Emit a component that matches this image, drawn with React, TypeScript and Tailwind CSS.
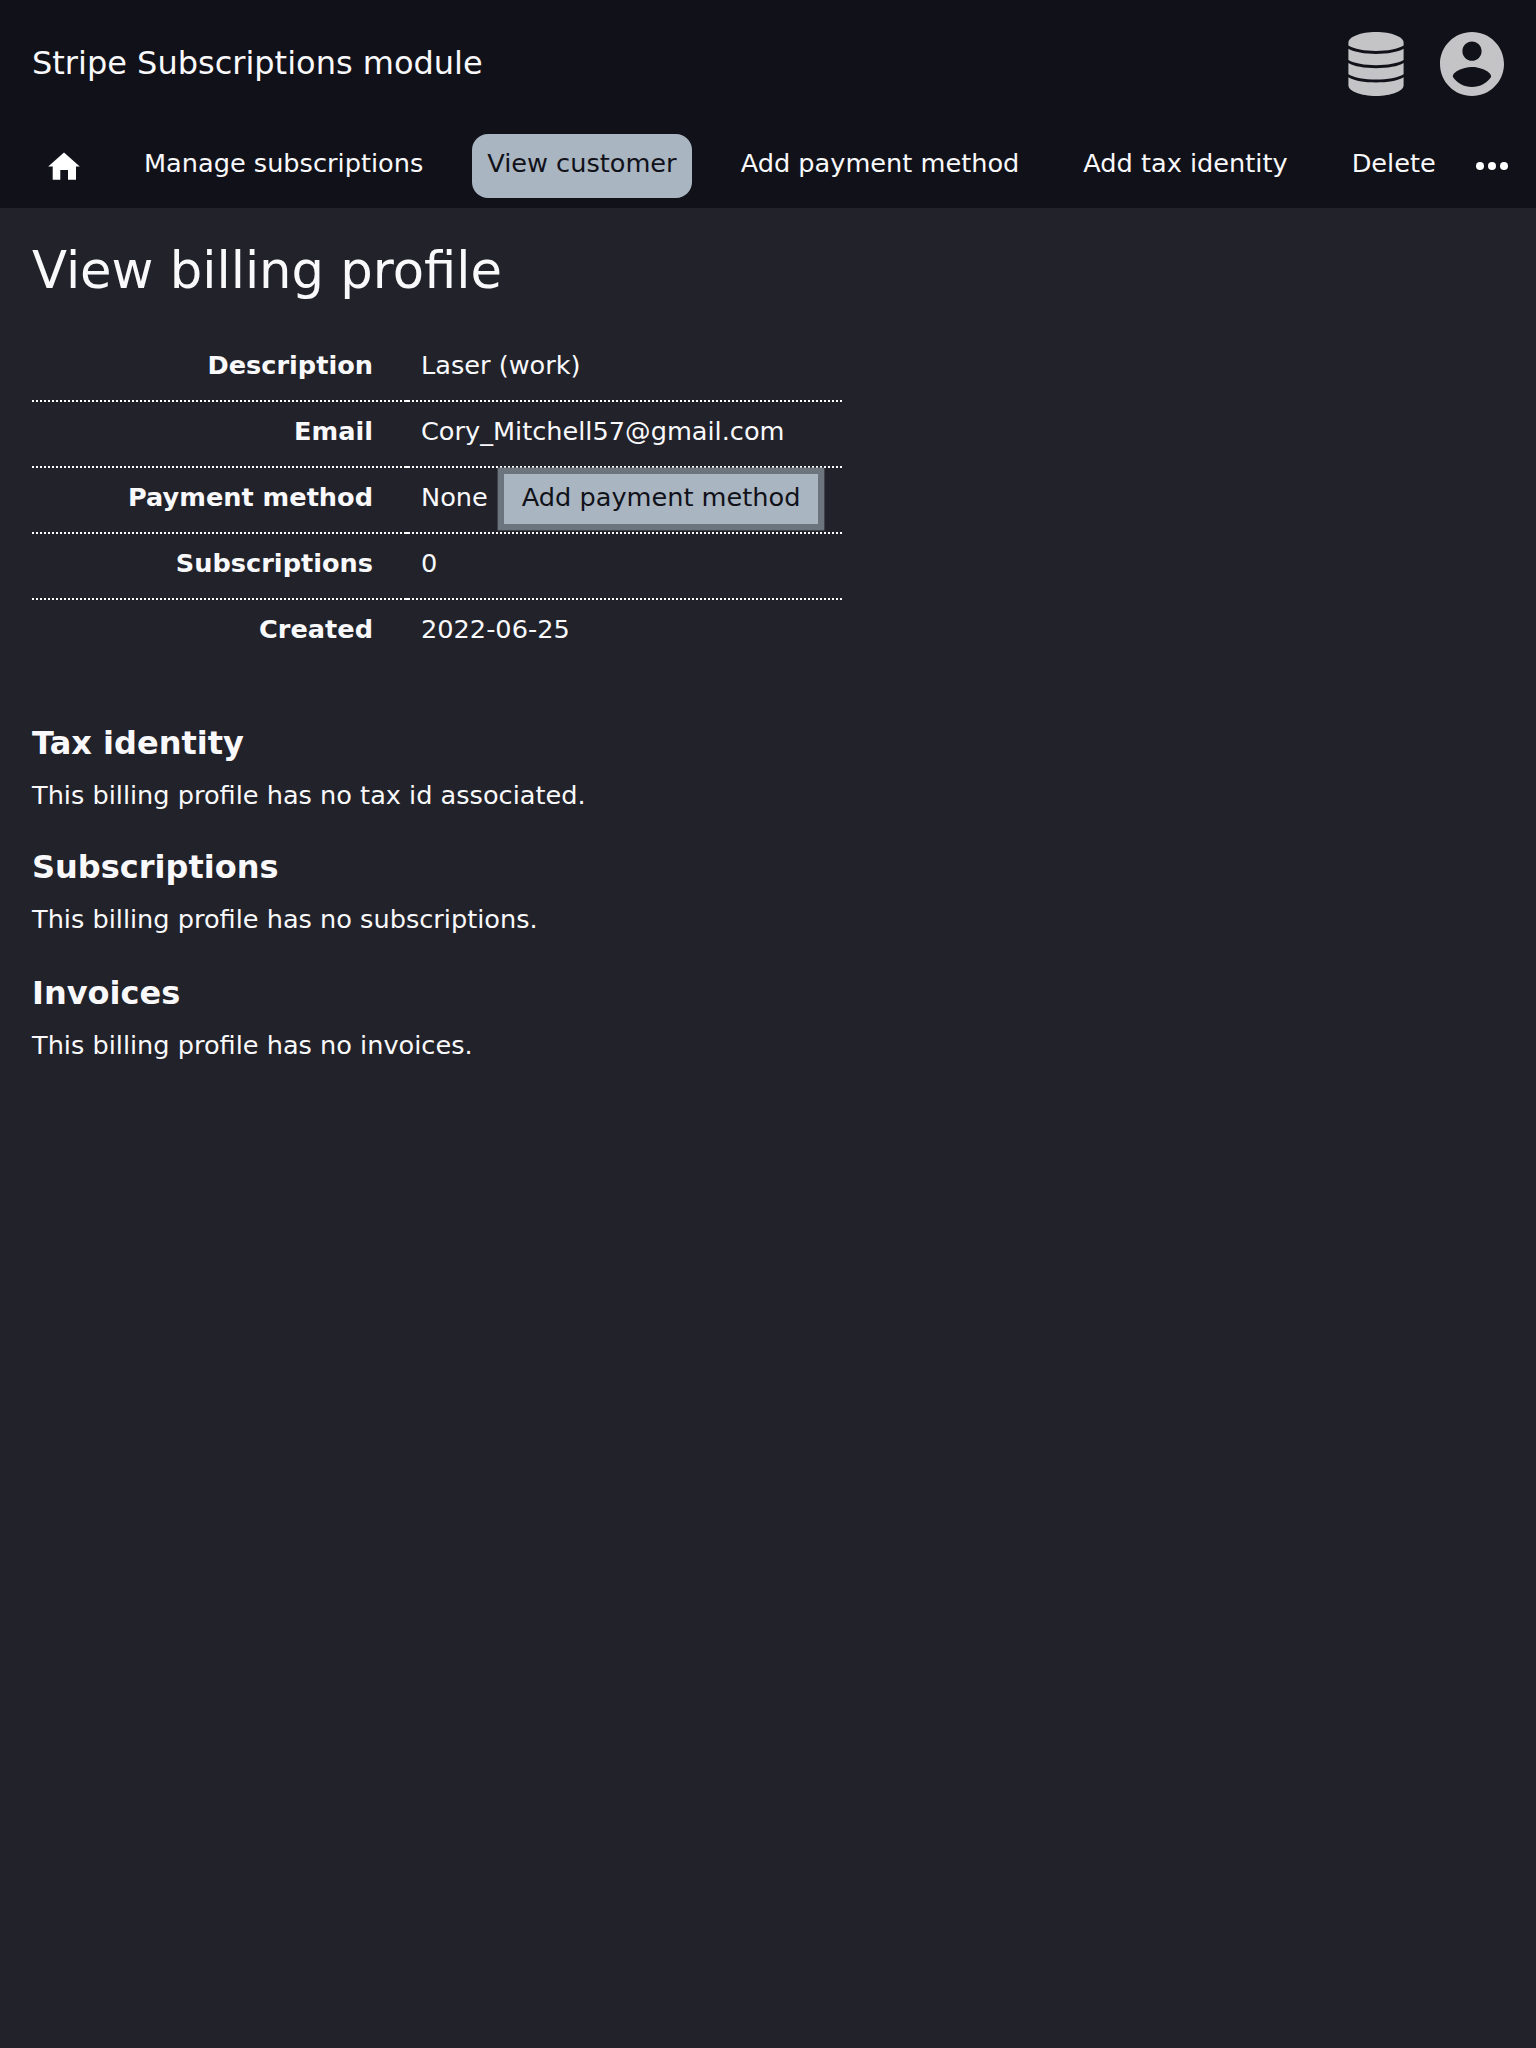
import React from "react";

function HomeIcon() {
  return (
    <svg viewBox="0 0 32 32" className="block h-8 w-8" fill="#ffffff">
      <path d="M16 2.6 0.2 16.4H4.7V29.7H12.3V20H20V29.7H28V16.4H31.8Z" />
    </svg>
  );
}

function DotsIcon() {
  return (
    <svg viewBox="0 0 32 32" className="block h-8 w-8" fill="#ffffff">
      <circle cx="4" cy="16" r="4" />
      <circle cx="16" cy="16" r="4" />
      <circle cx="28" cy="16" r="4" />
    </svg>
  );
}

function DatabaseIcon() {
  return (
    <svg viewBox="0 0 64 64" className="block h-16 w-16" fill="#c4c4c6">
      <path d="M32 0C16.6 0 4.4 4.8 4.4 10.7V13.6C10 17.2 20.5 19 32 19S54 17.2 59.6 13.6V10.7C59.6 4.8 47.4 0 32 0Z" />
      <path d="M4.4 16.8C10 20.2 20.5 21.9 32 21.9S54 20.2 59.6 16.8V28.1C54 31.5 43.5 33.2 32 33.2S10 31.5 4.4 28.1Z" />
      <path d="M4.4 31C10 34.4 20.5 36.2 32 36.2S54 34.4 59.6 31V42.3C54 45.8 43.5 47.6 32 47.6S10 45.8 4.4 42.3Z" />
      <path d="M4.4 45.2C10 48.7 20.5 50.4 32 50.4S54 48.7 59.6 45.2V53.3C59.6 59.2 47.4 64 32 64S4.4 59.2 4.4 53.3Z" />
    </svg>
  );
}

function AccountIcon() {
  return (
    <svg viewBox="2 2 20 20" className="block h-16 w-16" fill="#c4c4c6">
      <path d="M12 2C6.48 2 2 6.48 2 12s4.48 10 10 10 10-4.48 10-10S17.52 2 12 2zm0 3c1.66 0 3 1.34 3 3s-1.34 3-3 3-3-1.34-3-3 1.34-3 3-3zm0 14.2c-2.5 0-4.71-1.28-6-3.22.03-1.99 4-3.08 6-3.08 1.99 0 5.97 1.09 6 3.08-1.29 1.94-3.5 3.22-6 3.22z" />
    </svg>
  );
}

const navItems = [
  { label: "Manage subscriptions", active: false },
  { label: "View customer", active: true },
  { label: "Add payment method", active: false },
  { label: "Add tax identity", active: false },
  { label: "Delete", active: false },
];

const rows: { label: string; value: string; action?: string }[] = [
  { label: "Description", value: "Laser (work)" },
  { label: "Email", value: "Cory_Mitchell57@gmail.com" },
  { label: "Payment method", value: "None", action: "Add payment method" },
  { label: "Subscriptions", value: "0" },
  { label: "Created", value: "2022-06-25" },
];

const sections = [
  { title: "Tax identity", text: "This billing profile has no tax id associated.", box: "h-[124px]" },
  { title: "Subscriptions", text: "This billing profile has no subscriptions.", box: "h-[126px]" },
  { title: "Invoices", text: "This billing profile has no invoices.", box: "h-[124px]" },
];

export default function App() {
  return (
    <div className="min-h-[2048px] w-full overflow-hidden bg-[#22222a] font-['DejaVu_Sans',sans-serif] text-[25.6px] text-[#f9f9fb]">
      <header className="h-[208px] bg-[#11111a]">
        <div className="flex h-32 items-center justify-between px-8">
          <div className="pb-0.5 text-[32px] leading-[38px]">Stripe Subscriptions module</div>
          <div className="flex gap-8">
            <DatabaseIcon />
            <AccountIcon />
          </div>
        </div>
        <nav className="flex gap-8 pt-1.5 pl-8">
          <a className="flex h-16 w-16 items-center justify-center">
            <HomeIcon />
          </a>
          {navItems.map((item) => (
            <a
              key={item.label}
              className={
                item.active
                  ? "mx-[0.6px] h-16 rounded-2xl bg-[#a9b5c0] px-[15.4px] pt-[14px] leading-[30px] whitespace-nowrap text-[#11111a]"
                  : "h-16 px-4 pt-[14px] leading-[30px] whitespace-nowrap"
              }
            >
              {item.label}
            </a>
          ))}
          <a className="-ml-2 flex h-16 shrink-0 items-center">
            <DotsIcon />
          </a>
        </nav>
      </header>

      <main className="px-8">
        <h1 className="pt-8 text-[51.2px] leading-[60px]">View billing profile</h1>

        <table className="mt-9 w-[810px] table-fixed border-separate border-spacing-0 leading-[30px]">
          <colgroup>
            <col className="w-[374px]" />
            <col className="w-0.5" />
            <col className="w-[434px]" />
          </colgroup>
          <tbody className="[&>tr:not(:last-child)>*]:border-b-2">
            {rows.map((row) => (
              <tr key={row.label} className="h-[66px]">
                <th className="h-[66px] border-dotted border-white p-0 pt-[14px] pr-[33px] text-right align-top font-bold">
                  {row.label}
                </th>
                <td aria-hidden="true" className="border-solid border-white p-0" />
                <td className="h-[66px] border-dotted border-white p-0 pt-[14px] pl-[13px] align-top whitespace-nowrap">
                  {row.value}
                  {row.action && (
                    <button className="relative top-0.5 -my-2.5 ml-4 h-[50px] bg-[#a9b5c0] px-[18px] align-baseline leading-[46px] text-[#11111a] shadow-[0_0_0_6.4px_#6c747d]">
                      <span className="relative -top-0.5">{row.action}</span>
                    </button>
                  )}
                </td>
              </tr>
            ))}
          </tbody>
        </table>

        <div className="mt-[58px]">
          {sections.map((section) => (
            <section key={section.title} className={section.box}>
              <h2 className="text-[32px] leading-[38px] font-bold">{section.title}</h2>
              <p className="mt-[18px] leading-[30px]">{section.text}</p>
            </section>
          ))}
        </div>
      </main>
    </div>
  );
}
